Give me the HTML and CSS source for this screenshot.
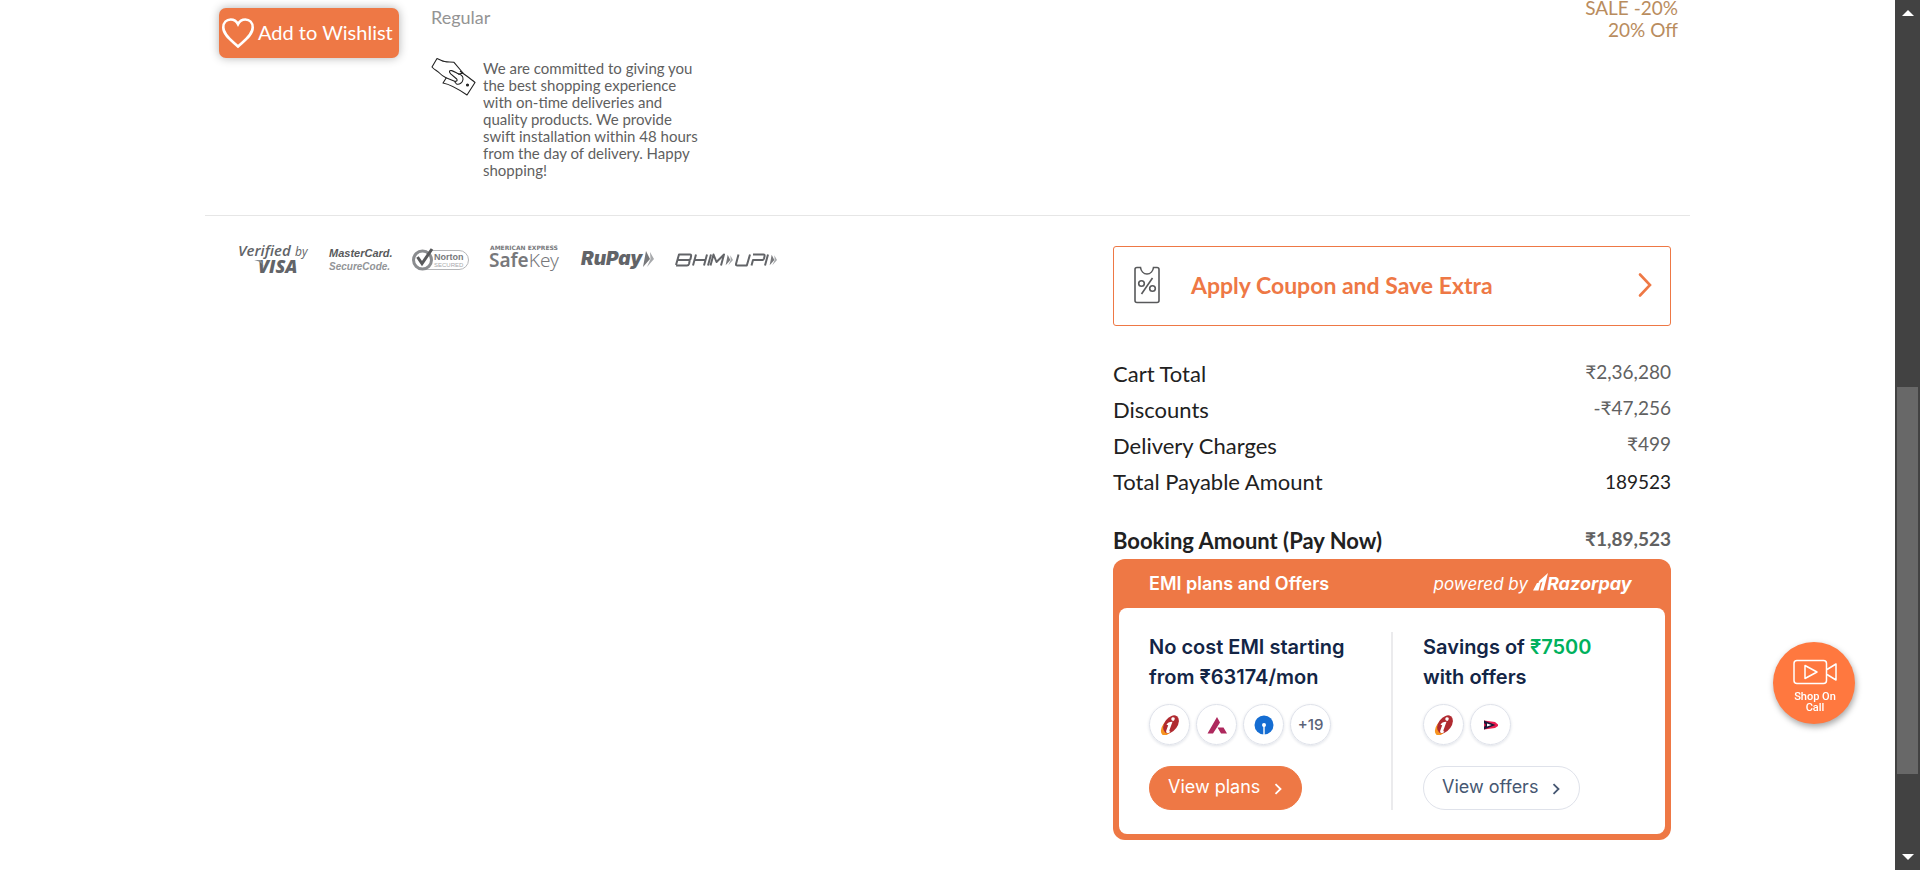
FILE: index.html
```html
<!DOCTYPE html>
<html lang="en">
<head>
<meta charset="utf-8">
<title>Shopping Cart</title>
<meta name="viewport" content="width=device-width, initial-scale=1">
<link rel="stylesheet" href="styles.css">
</head>
<body>
<svg class="sprite" aria-hidden="true">
  <symbol id="icici" viewBox="0 0 20 20">
    <ellipse cx="8" cy="12" rx="5.400" ry="9.500" transform="rotate(36 8 12)" fill="#f79420"/>
    <ellipse cx="11" cy="9.300" rx="6.500" ry="10" transform="rotate(36 11 9.300)" fill="#b02a30"/>
    <path d="M13 2.300a1.700 1.700 0 1 1-1 3.100a1.700 1.700 0 0 1 1-3.100zM6.500 9.800c1-2 3-3.100 6-3l-3 8.200c-.3 1.200.2 1.800 1 1.700c-1.700 2-5 1.800-4.300-1l2-5.500c-.7-.2-1.200-.3-1.700-.4z" fill="#fff"/>
  </symbol>
  <symbol id="chevron" viewBox="0 0 8 12"><path d="M1.500 1.200l5 4.800l-5 4.800" fill="none" stroke="currentColor" stroke-width="1.800"/></symbol>
  <symbol id="arrows" viewBox="0 0 12 16">
    <path d="M4 0l4 8l-7 8z" fill="#77787b"/><path d="M8 1l4 7l-7 8l3.500-8z" fill="#a7a9ac"/>
  </symbol>
</svg>

<div class="shell">
  <main class="page">
    <section class="item">
      <button class="wishlist" type="button">
        <svg width="34" height="32" viewBox="0 0 34 32" aria-hidden="true"><path d="M17 29.500C12 24.500 2.300 18.500 2.300 10.500C2.300 5.500 5.500 2.500 9.700 2.500C13 2.500 15.500 4.300 17 7.200C18.500 4.300 21 2.500 24.300 2.500C28.500 2.500 31.700 5.500 31.700 10.500C31.700 18.500 22 24.500 17 29.500z" fill="none" stroke="#fff" stroke-width="2.600"/></svg>
        <span>Add to Wishlist</span>
      </button>
      <div class="details">
        <p class="variant">Regular</p>
        <div class="promise">
          <svg width="46" height="40" viewBox="0 0 46 40" fill="none" stroke="#222" stroke-width="1.100" stroke-linejoin="round" aria-hidden="true">
            <path d="M6 1.500L1 10c2.500 3 5.500 3.800 8 6.500c2 2.200 3.500 3 6 4.300l8 3.200c2 .9 4-.4 2.700-2l-6-5.200c-2-2-1.500-3.700 1-3.200c2.500.6 4.500 2.300 7.300 3.500L32 16L23 5.300C18 4.700 14 5.500 10.500 3.500z"/>
            <path d="M15.500 20.500l-3.500 5.500c8 1.500 16 6.500 24 12l8-12.500c-5-4.500-10-7.500-15-11.500M27 17c3 0 5.500 2.500 5 5.500c-.4 3-3.500 5.500-6.500 4.500l-2-2.500"/>
            <circle cx="36.500" cy="28" r="1" fill="#222"/>
          </svg>
          <p>We are committed to giving you the best shopping experience with on-time deliveries and quality products. We provide swift installation within 48 hours from the day of delivery. Happy shopping!</p>
        </div>
      </div>
      <p class="sale">SALE -20%<br>20% Off</p>
    </section>

    <div class="checkout">
      <div class="trust">
        <svg width="72" height="34" viewBox="0 0 72 34" role="img" aria-label="Verified by Visa">
          <g fill="#626468" font-family="Open Sans, sans-serif" font-style="italic">
            <text x="0" y="15" font-size="15" font-weight="600">Verified</text>
            <text x="57" y="15" font-size="12">by</text>
            <text x="20" y="32" font-size="18" font-weight="800">VISA</text>
          </g>
          <path d="M16 19h7l3 7c-2-4-5-6-10-7z" fill="#8a8c8f"/>
        </svg>
        <svg width="64" height="34" viewBox="0 0 64 34" role="img" aria-label="MasterCard SecureCode">
          <g font-family="Liberation Sans, sans-serif" font-style="italic" font-weight="700">
            <text x="0" y="16" fill="#58595b" font-size="11">MasterCard.</text>
            <text x="0" y="29" fill="#939598" font-size="10">SecureCode.</text>
          </g>
        </svg>
        <svg width="58" height="34" viewBox="0 0 58 34" role="img" aria-label="Norton Secured">
          <path d="M18 9.500h29a9.500 9.500 0 0 1 0 19H12" fill="#fff" stroke="#b5b6b8"/>
          <circle cx="10.500" cy="19" r="9" fill="#fff" stroke="#8a8c8f" stroke-width="3"/>
          <path d="M5.500 16l4.500 6.500L20 8" fill="none" stroke="#58595b" stroke-width="3"/>
          <text x="22" y="19" font-family="Liberation Sans, sans-serif" font-weight="700" font-size="9" fill="#77787b">Norton</text>
          <text x="22" y="26" font-family="Liberation Sans, sans-serif" font-size="6" fill="#a7a9ac">SECURED</text>
        </svg>
        <svg width="72" height="34" viewBox="0 0 72 34" role="img" aria-label="American Express SafeKey">
          <text x="1" y="9" font-family="DejaVu Sans, sans-serif" font-weight="700" font-size="6" fill="#77787b">AMERICAN EXPRESS</text>
          <text x="0" y="26" font-family="Noto Sans, sans-serif" font-size="19" fill="#77787b"><tspan font-weight="600">Safe</tspan><tspan font-weight="300">Key</tspan></text>
        </svg>
        <svg width="76" height="34" viewBox="0 0 76 34" role="img" aria-label="RuPay">
          <text x="1" y="24" font-family="Inter, sans-serif" font-style="italic" font-weight="900" font-size="19" fill="#626468">RuPay</text>
          <use href="#arrows" x="62" y="10" width="12" height="16"/>
        </svg>
        <svg width="102" height="34" viewBox="0 0 102 34" role="img" aria-label="BHIM UPI">
          <g fill="none" stroke="#626468" stroke-width="2" stroke-linejoin="round">
            <path d="M1 24L4 13.500H15q1.500 0 1 2L15.500 18q-.5 1-2 1H3.500H13.500q1.500 0 1 1.500L14 23q-.5 1.500-2 1.500H1M18 24.500l3-11M29 24.500l3-11M19.500 19H30.500M33 24.500l3-11M35.500 24.500l3-11l3 7.500l7.500-7.500l-3 11"/>
            <path d="M63.500 13.500L61 23q-.3 1.500 1.300 1.500h9.500L75 13.500M76.500 24.500l1.500-5.500h9.500q1 0 1.500-1.500l.5-2q.5-2-1-2H78M90 24.500l3-11"/>
          </g>
          <use href="#arrows" x="50" y="13" width="8" height="12"/><use href="#arrows" x="94" y="13" width="8" height="12"/>
        </svg>
      </div>

      <aside class="summary">
        <button class="coupon" type="button">
          <svg width="26" height="38" viewBox="0 0 26 38" fill="none" stroke="#58595b" stroke-width="1.600" aria-hidden="true">
            <path d="M3 1.500h3.500c.5 3.500 3 6.500 6.500 6.500s6-3 6.500-6.500H23q2 0 2 2V34.500q0 2-2 2H3q-2 0-2-2V3.500q0-2 2-2z"/>
            <path d="M18.500 12L7.500 28"/><circle cx="7.500" cy="17.500" r="2.800"/><circle cx="18.500" cy="22.500" r="2.800"/>
          </svg>
          <span>Apply Coupon and Save Extra</span>
          <svg width="14" height="24" viewBox="0 0 14 24" aria-hidden="true"><path d="M2 1.500l10 10.500L2 22.500" fill="none" stroke="#ee7845" stroke-width="2.600" stroke-linecap="round"/></svg>
        </button>

        <dl class="totals">
          <div><dt>Cart Total</dt><dd>₹2,36,280</dd></div>
          <div><dt>Discounts</dt><dd>-₹47,256</dd></div>
          <div><dt>Delivery Charges</dt><dd>₹499</dd></div>
          <div class="payable"><dt>Total Payable Amount</dt><dd>189523</dd></div>
          <div class="booking"><dt>Booking Amount (Pay Now)</dt><dd>₹1,89,523</dd></div>
        </dl>

        <section class="emi">
          <header>
            <h2>EMI plans and Offers</h2>
            <p><i>powered by</i>
              <svg width="102" height="24" viewBox="0 0 102 24" role="img" aria-label="Razorpay" fill="#fff">
                <path d="M15 1L10.500 18.500H7L9.500 9.500L5 12.500L6 9z"/><path d="M4 11L0 18.500h5.500l2-7.500z"/>
                <text x="14" y="18" font-family="Inter, sans-serif" font-style="italic" font-weight="700" font-size="18">Razorpay</text>
              </svg>
            </p>
          </header>
          <div class="offers">
            <div class="offer">
              <h3>No cost EMI starting<br>from ₹63174/mon</h3>
              <ul>
                <li><svg width="20" height="20" role="img" aria-label="ICICI Bank"><use href="#icici"/></svg></li>
                <li><svg width="20" height="20" viewBox="0 0 20 20" role="img" aria-label="Axis Bank" fill="#ae285d"><path d="M10 2l3 5.500L6 18.500H.500zM10.500 12.500h6l3.500 6h-6z"/></svg></li>
                <li><svg width="20" height="20" viewBox="0 0 20 20" role="img" aria-label="State Bank of India"><circle cx="10" cy="10" r="9.500" fill="#156dd2"/><circle cx="10" cy="10" r="2" fill="#fff"/><path d="M9.300 10h1.400v10H9.300z" fill="#fff"/></svg></li>
                <li>+19</li>
              </ul>
              <button class="pill solid" type="button"><span>View plans</span> <svg width="8" height="12" aria-hidden="true"><use href="#chevron"/></svg></button>
            </div>
            <div class="offer">
              <h3>Savings of <b>₹7500</b><br>with offers</h3>
              <ul>
                <li><svg width="20" height="20" role="img" aria-label="ICICI Bank"><use href="#icici"/></svg></li>
                <li><svg width="20" height="20" viewBox="0 0 20 20" role="img" aria-label="DCB Bank"><path d="M3 5.500L14 7l3 2.500v1.500L14 13L3 14.500z" fill="#ea1d4f"/><path d="M3 5.500L14.500 10L3 14.500V12l2-2l-2-2z" fill="#1d1838"/><path d="M6 8.500l4.500 1.500L6 11.500z" fill="#fff"/></svg></li>
              </ul>
              <button class="pill" type="button"><span>View offers</span> <svg width="8" height="12" aria-hidden="true"><use href="#chevron"/></svg></button>
            </div>
          </div>
        </section>
      </aside>
    </div>
  </main>

  <button class="call" type="button">
    <svg width="44" height="26" viewBox="0 0 44 26" fill="none" stroke="#fff" stroke-width="1.500" stroke-linejoin="round" aria-hidden="true"><rect x="1" y="1.500" width="32.500" height="23" rx="3"/><path d="M12 6.500v13l12-6.500zM34 10.500l9-5.500v16l-9-5.500"/></svg>
    <span>Shop On<br>Call</span>
  </button>

  <div class="scrollbar" aria-hidden="true">
    <svg width="12" height="6" viewBox="0 0 12 6"><path d="M6 0l6 6H0z" fill="#fff"/></svg>
    <div class="track"><div class="thumb"></div></div>
    <svg width="12" height="6" viewBox="0 0 12 6"><path d="M0 0h12L6 6z" fill="#fff"/></svg>
  </div>
</div>
</body>
</html>
```
FILE: styles.css
```css
* { box-sizing: border-box; }
body, p, h2, h3, ul, dl, dd { margin: 0; }
body { background: #fff; color: #212121; font-family: Lato, sans-serif; }
button { font: inherit; border: 0; cursor: pointer; }
svg { display: block; flex: none; overflow: visible; }
.sprite { position: absolute; width: 0; height: 0; }

.shell { min-height: 100vh; padding-right: 25px; }
.page { max-width: 1485px; margin: 0 auto; }

.item {
  display: flex;
  align-items: flex-start;
  height: 216px;
  padding: 0 12px 0 14px;
  border-bottom: 1px solid #e6e6e6;
}
.wishlist {
  display: flex;
  align-items: center;
  gap: 3px;
  width: 180px;
  height: 50px;
  margin-top: 8px;
  padding: 0 2px;
  border-radius: 7px;
  background: #ee7845;
  color: #fff;
  font-size: 20px;
  white-space: nowrap;
  box-shadow: 0 0 10px rgba(0, 0, 0, .3);
}
.wishlist span { padding-bottom: 2px; }
.details { width: 270px; margin-left: 32px; padding-top: 5px; }
.variant { color: #949494; font-size: 18px; line-height: 24px; }
.promise { display: flex; gap: 6px; padding-top: 28px; color: #5f5f5f; font-size: 15px; line-height: 17px; }
.promise p { padding-top: 3px; }
.sale { margin-top: -3px; margin-left: auto; color: #b98c5e; font-size: 19px; line-height: 22px; text-align: right; }

.checkout { display: flex; justify-content: space-between; align-items: flex-start; padding: 25px 19px 30px 33px; }
.trust { display: flex; gap: 19px; }
.summary { width: 558px; padding-top: 5px; }

.coupon {
  display: flex;
  align-items: center;
  width: 100%;
  height: 80px;
  padding: 0 18px 2px 20px;
  border: 1px solid #ee7845;
  border-radius: 3px;
  background: #fff;
  color: #ee7845;
  font-size: 23px;
  font-weight: 700;
}
.coupon span { flex: 1; padding-left: 31px; text-align: left; }

.totals { padding-top: 30px; font-size: 22px; line-height: 36px; }
.totals div { display: flex; justify-content: space-between; }
.totals dd { color: #616161; font-size: 19px; line-height: 32px; }
.totals .payable dd { color: #212121; line-height: 36px; }
.totals .booking { padding-top: 23px; font-weight: 700; }

.emi { padding: 0 6px 6px; border-radius: 12px; background: #ee7845; font-family: Inter, sans-serif; }
.emi header { display: flex; align-items: center; justify-content: space-between; height: 49px; padding: 0 30px; color: #fff; }
.emi h2 { font-size: 18px; font-weight: 600; }
.emi header p { display: flex; align-items: center; gap: 5px; font-size: 17px; }
.offers { display: grid; grid-template-columns: 242px 1fr; padding: 24px 30px; border-radius: 8px; background: #fff; }
.offer + .offer { padding-left: 30px; border-left: 2px solid #ebebed; }
.offer h3 { color: #132546; font-size: 20px; font-weight: 600; line-height: 30px; }
.offer b { color: #00b15d; font-weight: 600; }
.offer ul { display: flex; gap: 6px; margin: 12px 0 21px; padding: 0; list-style: none; }
.offer li {
  display: grid;
  place-items: center;
  width: 41px;
  height: 41px;
  border: 1px solid #dfe2ea;
  border-radius: 50%;
  box-shadow: 0 1px 3px rgba(30, 50, 90, .15);
  color: #5a6378;
  font-size: 15px;
  font-weight: 500;
}
.pill {
  display: flex;
  align-items: center;
  gap: 14px;
  height: 44px;
  padding: 0 19px 0 18px;
  border: 1px solid #dfe2ea;
  border-radius: 22px;
  background: #fff;
  color: #465772;
  font-size: 18px;
}
.pill.solid { border-color: #ee7845; background: #ee7845; color: #fff; }
.pill span { padding-bottom: 3px; }
.pill svg { margin-top: 2px; }

.call {
  position: fixed;
  right: 65px;
  bottom: 146px;
  display: flex;
  flex-direction: column;
  align-items: center;
  gap: 6px;
  width: 82px;
  height: 82px;
  padding: 17px 0 0 2px;
  border-radius: 50%;
  background: #ff783f;
  color: #fff;
  font: 500 11px/11px Roboto, sans-serif;
  box-shadow: 1px 3px 6px rgba(0, 0, 0, .35);
}

.scrollbar {
  position: fixed;
  inset: 0 0 0 auto;
  display: flex;
  flex-direction: column;
  align-items: center;
  justify-content: space-between;
  width: 25px;
  padding: 10px 0;
  background: #424242;
}
.track { display: flex; flex: 1; flex-direction: column; padding: 371px 0 80px; }
.thumb { flex: 1; width: 21px; background: #686868; }
```
